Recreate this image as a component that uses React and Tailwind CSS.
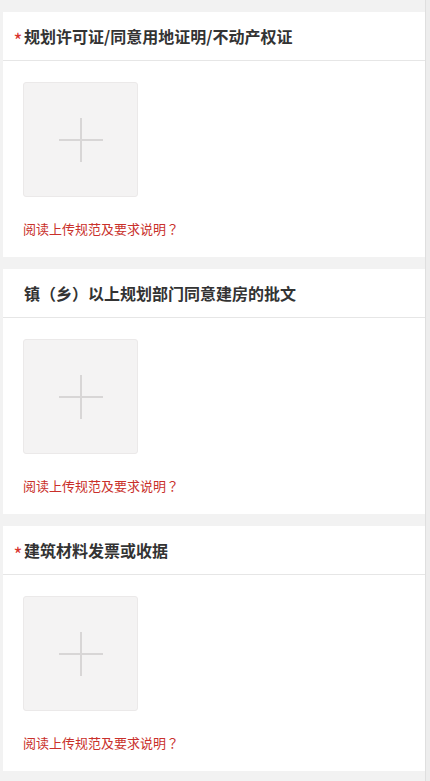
const punct = { fontFamily: '"Noto Sans CJK TC", "Noto Sans CJK SC", sans-serif' };

const sections = [
  { title: ["规划许可证/同意用地证明/不动产权证"], required: true },
  { title: ["镇", "（", "乡", "）", "以上规划部门同意建房的批文"], required: false },
  { title: ["建筑材料发票或收据"], required: true },
];

function UploadBox() {
  return (
    <button
      type="button"
      className="flex h-[115px] w-[115px] items-center justify-center rounded-[3px] border border-[#ebe9e9] bg-[#f4f3f3]"
    >
      <svg width="44" height="44" viewBox="0 0 44 44">
        <path d="M22 0v44M0 22h44" stroke="#d8d6d6" strokeWidth="2" fill="none" />
      </svg>
    </button>
  );
}

function Section({ title, required }) {
  return (
    <div className="bg-white">
      <div className="flex h-[49px] items-center border-b border-[#e6e6e6] pl-[9px]">
        <span className="w-[12px] pt-[7px] text-center text-[19px] leading-none text-[#d9332e]">
          {required ? "*" : ""}
        </span>
        <span className="text-[16px] font-bold text-[#333]">
          {title.map((t, i) =>
            t === "（" || t === "）" ? (
              <span key={i} style={punct}>{t}</span>
            ) : (
              <span key={i}>{t}</span>
            )
          )}
        </span>
      </div>
      <div className="pb-[19px] pl-[20px] pt-[21px]">
        <UploadBox />
        <p className="mt-[23px] text-[13px] leading-[18px] text-[#c9302b]">
          阅读上传规范及要求说明<span style={punct}>？</span>
        </p>
      </div>
    </div>
  );
}

export default function App() {
  return (
    <div
      className="flex min-h-[781px] bg-[#f2f2f2]"
      style={{ fontFamily: '"Noto Sans CJK SC", "Noto Sans", sans-serif' }}
    >
      <div className="flex flex-1 flex-col gap-[12px] pb-[6px] pl-[3px] pt-[12px]">
        {sections.map((s, i) => (
          <Section key={i} title={s.title} required={s.required} />
        ))}
      </div>
      <div className="w-[5px] border-l border-[#dfdfdf] bg-[#ededed]" />
    </div>
  );
}
